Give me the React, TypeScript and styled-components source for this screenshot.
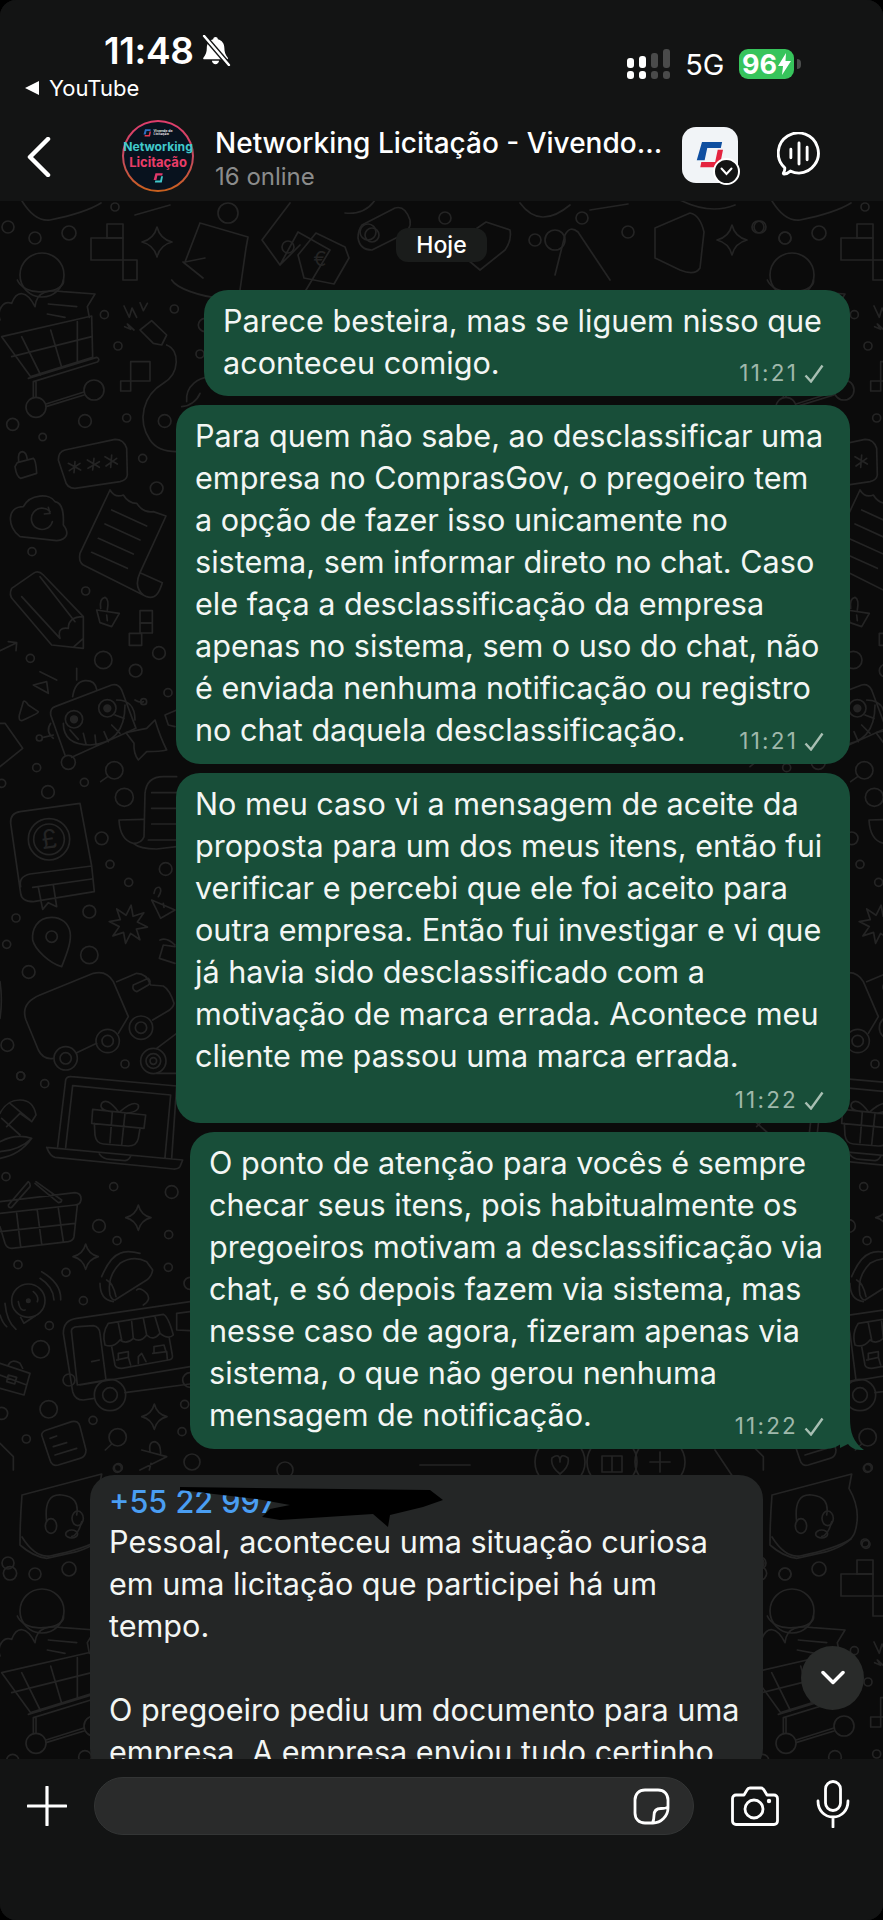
import React from "react";
import styled, { createGlobalStyle } from "styled-components";

const Global = createGlobalStyle`
  html, body { margin: 0; padding: 0; background: #000; }
  body { font-family: Inter, "Liberation Sans", sans-serif; -webkit-font-smoothing: antialiased; }
`;

const Screen = styled.div`
  width: 883px;
  height: 1920px;
  display: flex;
  flex-direction: column;
  overflow: hidden;
  border-radius: 16px;
  background: #131414;
  color: #fff;
`;

/* ---------- top bar ---------- */
const Header = styled.header`
  height: 201px;
  flex: none;
  display: flex;
  flex-direction: column;
  background: #131414;
  position: relative;
  z-index: 2;
`;
const StatusBar = styled.div`
  height: 120px;
  display: flex;
  justify-content: space-between;
  box-sizing: border-box;
  padding: 28px 89px 0 25px;
`;
const StatusLeft = styled.div`
  display: flex;
  flex-direction: column;
`;
const ClockRow = styled.div`
  display: flex;
  align-items: center;
  gap: 8px;
  margin-left: 79px;
  height: 44px;
`;
const Clock = styled.span`
  font-size: 37px;
  font-weight: 600;
  letter-spacing: -0.4px;
`;
const BackApp = styled.div`
  display: flex;
  align-items: center;
  gap: 9px;
  font-size: 22px;
  height: 28px;
  margin-top: 2px;
`;
const StatusRight = styled.div`
  display: flex;
  align-items: center;
  height: 30px;
  margin-top: 21px;
`;
const Network = styled.span`
  font-size: 29px;
  margin: 0 15px 0 15px;
  letter-spacing: -0.3px;
`;
const Battery = styled.div`
  width: 55px;
  height: 30px;
  border-radius: 9px;
  background: #37c45c;
  display: flex;
  align-items: center;
  justify-content: center;
  gap: 1px;
  font-size: 27px;
  font-weight: 700;
  position: relative;
`;
const BatteryCap = styled.i`
  position: absolute;
  right: -7px;
  top: 10px;
  width: 4px;
  height: 10px;
  border-radius: 0 4px 4px 0;
  background: #4b4d4c;
`;
const NavBar = styled.div`
  height: 81px;
  display: flex;
  align-items: flex-start;
  padding-left: 27px;
`;
const BackIcon = styled.svg`
  width: 24px;
  height: 40px;
  margin-top: 17px;
`;
const Avatar = styled.div`
  width: 72px;
  height: 72px;
  margin: 0 21px 0 71px;
  border-radius: 50%;
  background: linear-gradient(180deg, #e03d6c 0%, #c64b5d 55%, #c9611c 100%);
  padding: 2px;
  box-sizing: border-box;
  flex: none;
`;
const AvatarInner = styled.div`
  width: 100%;
  height: 100%;
  border-radius: 50%;
  background: #08121e;
  display: flex;
  flex-direction: column;
  align-items: center;
  justify-content: center;
  font-weight: 800;
  line-height: 1;
`;
const AvatarTop = styled.div`
  display: flex;
  align-items: center;
  gap: 2px;
  font-size: 3.5px;
  font-weight: 600;
  line-height: 1.1;
  color: #e8e8e8;
  margin-bottom: 4px;
`;
const AvatarTeal = styled.span`
  font-size: 12.2px;
  font-weight: 700;
  color: #41c9cc;
`;
const AvatarPink = styled.span`
  font-size: 13px;
  font-weight: 700;
  color: #ea3d68;
  margin: 2px 0 4px;
`;
const Titles = styled.div`
  width: 467px;
  flex: none;
  margin-top: 4px;
`;
const Title = styled.div`
  font-size: 28px;
  font-weight: 500;
  line-height: 38px;
  white-space: nowrap;
`;
const Subtitle = styled.div`
  font-size: 24px;
  line-height: 29px;
  color: #8b8c8c;
`;
const AppTile = styled.div`
  width: 56px;
  height: 56px;
  margin-top: 7px;
  border-radius: 14px;
  background: #f1f4f7;
  position: relative;
  flex: none;
`;
const TileMark = styled.div`
  position: absolute;
  left: 13px;
  top: 14px;
`;
const TileBadge = styled.div`
  position: absolute;
  right: -2px;
  bottom: -2px;
  width: 27px;
  height: 27px;
  border-radius: 50%;
  background: #131414;
  border: 2px solid #fff;
  box-sizing: border-box;
  display: flex;
  align-items: center;
  justify-content: center;
`;
const CallIcon = styled.svg`
  width: 44px;
  height: 44px;
  margin: 12px 0 0 39px;
`;

/* ---------- conversation ---------- */
const Chat = styled.main`
  flex: 1;
  min-height: 0;
  position: relative;
  overflow: hidden;
  background: #0b0b0b;
  display: flex;
  flex-direction: column;
  align-items: flex-end;
  padding: 27px 33px 0 0;
  box-sizing: border-box;
`;
const Wallpaper = styled.svg`
  position: absolute;
  left: 0;
  top: 0;
  width: 883px;
  height: 1558px;
  fill: none;
  stroke: #242424;
  stroke-width: 1.7;
  stroke-linecap: round;
  stroke-linejoin: round;
  * { vector-effect: non-scaling-stroke; }
  text { fill: #242424; stroke: none; font-family: Inter, sans-serif; }
`;
const DayPill = styled.div`
  flex: none;
  align-self: center;
  margin-left: 33px;
  width: 91px;
  height: 34px;
  border-radius: 12px;
  background: #1a1c1b;
  font-size: 23px;
  font-weight: 500;
  display: flex;
  align-items: center;
  justify-content: center;
  margin-bottom: 28px;
  position: relative;
`;
const Bubble = styled.div<{ $width: number; $bottom: number }>`
  position: relative;
  flex: none;
  box-sizing: border-box;
  width: ${(p) => p.$width}px;
  padding: 10px 12px ${(p) => p.$bottom}px 19px;
  margin-bottom: 9px;
  border-radius: 24px;
  background: #184e39;
  font-size: 30.6px;
  line-height: 42px;
  color: #f3f6f4;
  white-space: nowrap;
`;
const IncomingBubble = styled(Bubble)`
  align-self: flex-start;
  margin: 17px 0 0 90px;
  padding: 6px 12px 0 19px;
  background: #242626;
`;
const Sender = styled.div`
  height: 40px;
  line-height: 42px;
  color: #4a9ef2;
  font-weight: 500;
  position: relative;
`;
const Redaction = styled.svg`
  position: absolute;
  left: 71px;
  top: 6px;
  width: 270px;
  height: 44px;
`;
const Meta = styled.div`
  position: absolute;
  right: 26px;
  bottom: 11px;
  display: flex;
  align-items: center;
  gap: 6px;
  font-size: 22.5px;
  line-height: 24px;
  letter-spacing: 2.2px;
  color: #9fb8ab;
`;
const Tail = styled.svg`
  position: absolute;
  right: -14px;
  bottom: -1px;
  width: 24px;
  height: 32px;
`;
const ScrollDown = styled.div`
  position: absolute;
  right: 19px;
  bottom: 49px;
  width: 63px;
  height: 64px;
  border-radius: 50%;
  background: #292b2a;
  display: flex;
  align-items: center;
  justify-content: center;
`;

/* ---------- composer ---------- */
const Composer = styled.footer`
  height: 161px;
  flex: none;
  box-sizing: border-box;
  padding: 18px 0 0 27px;
  display: flex;
  align-items: flex-start;
  background: #131414;
  position: relative;
  z-index: 2;
`;
const PlusIcon = styled.svg`
  width: 40px;
  height: 40px;
  margin-top: 9px;
  flex: none;
`;
const InputField = styled.div`
  width: 600px;
  height: 58px;
  margin-left: 27px;
  box-sizing: border-box;
  padding: 10px 23px 0 0;
  border-radius: 29px;
  background: #2a2b2b;
  border: 1px solid #333535;
  display: flex;
  justify-content: flex-end;
  flex: none;
`;
const CameraIcon = styled.svg`
  width: 48px;
  height: 40px;
  margin: 9px 0 0 37px;
`;
const MicIcon = styled.svg`
  width: 34px;
  height: 48px;
  margin: 3px 0 0 37px;
`;

/* ---------- doodle helpers ---------- */
const dots = (list: number[][]) =>
  list.map(([cx, cy, r], i) => <circle key={i} cx={cx} cy={cy} r={r} />);

const sparkle = (x: number, y: number, r: number) =>
  `M${x} ${y - r}Q${x + r * 0.2} ${y - r * 0.2} ${x + r} ${y}Q${x + r * 0.2} ${y + r * 0.2} ${x} ${y + r}Q${x - r * 0.2} ${y + r * 0.2} ${x - r} ${y}Q${x - r * 0.2} ${y - r * 0.2} ${x} ${y - r}Z`;

const burst = (cx: number, cy: number, R: number, r: number, n: number) =>
  Array.from({ length: n * 2 }, (_, i) => {
    const a = (Math.PI * i) / n - Math.PI / 2.2;
    const d = i % 2 ? r : R;
    return `${(cx + Math.cos(a) * d).toFixed(1)},${(cy + Math.sin(a) * d).toFixed(1)}`;
  }).join(" ");

const Doodles = () => (
  <Wallpaper viewBox="0 201 883 1558">
    <defs>
      <g id="wall-tile">
        {/* cart, plug, password card, cloud, receipt and pencil */}
        <g transform="translate(0 280) scale(.33333)">
          <path d="M5 170L275 108L278 232L92 290ZM65 170L122 285M152 150L185 262M232 125V245M35 230L275 170M85 295L290 232Q302 238 292 246L100 305M100 305V350M108 305V352M138 372L252 336M138 380L252 345" />
          {dots([[108, 382, 30], [282, 330, 30]])}
          <path d="M105 80C110 30 150 30 190 35L285 42L262 80L268 112M145 72L230 80M142 102L195 112M105 80C80 30 50 30 35 70C10 60-10 90 0 120" />
          <path d="M372 78L388 112L396 84L410 112M420 68L430 92L442 70M374 140L392 148L382 132L402 150M420 150L455 122L500 165L485 195L460 190ZM500 195C540 210 540 280 490 310C430 345 410 420 450 480C470 510 500 515 530 515" />
          <rect x="392" y="245" width="58" height="58" />
          <rect x="362" y="303" width="30" height="30" />
          {dots([[313, 104, 12], [354, 198, 12], [523, 87, 12], [38, 433, 18], [255, 423, 19], [128, 471, 11], [380, 414, 12], [494, 423, 19], [428, 535, 12], [470, 625, 19], [96, 815, 12], [257, 933, 12], [310, 1140, 26], [477, 1119, 19], [91, 1135, 12], [407, 1172, 19], [600, 222, 12]])}
          <path d="M52 548L100 535Q108 540 110 580L62 595Q50 592 45 560ZM56 545Q52 515 68 515Q80 518 82 540" />
          <path d="M195 510L345 478Q372 478 380 505L382 585Q380 600 360 605L225 625Q200 625 195 600L175 540Q175 515 195 510ZM205 550L242 570M225 545L222 578M240 550L208 572M262 540L298 562M282 535L278 570M298 545L264 565M315 530L352 552M335 525L332 562M350 535L318 558" />
          <path d="M60 770C20 740 20 680 70 680C90 640 150 640 165 665C195 670 190 720 190 735C210 760 200 780 170 782ZM150 695A32 32 0 1 0 157 725M145 682L150 700L133 702" />
          <path d="M330 630L240 820Q235 845 250 855L440 950C470 960 480 930 487 908L420 878C410 900 405 925 430 945M330 630Q345 655 370 645Q385 670 410 670Q430 700 460 695L498 708L420 878M335 690L440 738M315 732L420 780M295 775L400 822M275 817L382 865" />
          <path d="M35 925L100 880Q115 870 130 885L250 1010L250 1105L155 1095L40 960Q25 945 35 925ZM65 950L180 1075M120 890L225 1025M180 1075Q170 1040 205 1045Q205 1010 250 1010M222 1100L250 1075" />
          <path d="M290 990L358 1000L335 1040L300 1028ZM302 985Q298 955 315 952Q328 958 322 990M320 1005L322 1022" />
          <rect x="420" y="992" width="37" height="37" />
          <rect x="420" y="1029" width="37" height="30" />
          <rect x="388" y="1060" width="37" height="36" />
          <path d="M0 1112L50 1088M25 1085L50 1088L48 1112M120 1175L170 1200M230 1165V1200" />
          <path d="M52 0C60 20 90 40 130 35C170 35 195 15 190 0M515 0C530 25 600 50 665 55M600 340A65 65 0 0 1 545 380M560 365A65 65 0 0 1 640 295" />
          {dots([[615, 135, 20]])}
        </g>

        {/* robot, ledger, pin, truck and small shapes */}
        <g transform="translate(0 680) scale(.33333)">
          <path d="M165 80L335 15Q355 10 365 30L408 145L215 232M165 80Q150 85 152 105L195 225M190 130Q190 195 270 195Q375 190 375 75M210 150L235 178M250 160L258 192M285 165L288 195M312 155L325 185M335 135L360 160M345 105L372 115M152 130Q135 155 160 175M130 172L160 165M405 60Q420 70 430 65M350 60Q405 60 405 120" />
          {dots([[222, 118, 26], [322, 85, 26], [205, 247, 21], [118, 174, 9], [431, 65, 9]])}
          <circle cx="222" cy="118" r="10" fill="#242424" />
          <circle cx="322" cy="85" r="10" fill="#242424" />
          <path d="M70 65Q75 60 85 75L115 95Q115 100 65 122Q55 122 58 105Z" />
          <path d="M465 120Q480 170 500 210Q480 215 440 215L415 240Q400 220 402 190L378 158Q410 150 440 145Z" />
          <path d="M323 290L302 305" />
          {dots([[343, 271, 26], [110, 263, 12], [253, 307, 12], [144, 336, 19], [373, 352, 27], [305, 475, 19], [330, 553, 12], [386, 607, 12], [497, 567, 19], [268, 695, 19], [48, 714, 12], [20, 793, 12], [268, 825, 26], [86, 876, 19], [504, 38, 12], [375, 1152, 12], [62, 1188, 12], [22, 1095, 19], [5, 310, 12]])}
          <path d="M240 370L60 395Q30 400 32 430L62 640Q65 665 100 665L283 635L275 558L240 370M275 558L90 582Q55 590 62 620M275 597L98 622M115 622L128 688L145 668L170 680L160 615" />
          {dots([[147, 478, 62], [147, 478, 46]])}
          <text x="147" y="505" fontSize="78" textAnchor="middle" transform="rotate(-8 147 478)">£</text>
          <path d="M155 712C110 712 95 750 98 780C105 810 150 850 185 860C205 810 215 780 210 755C205 730 185 712 155 712Z" />
          <circle cx="155" cy="770" r="17" />
          <polygon points={burst(385, 733, 58, 28, 8)} />
          <path d="M530 290H490Q440 290 435 340L432 470Q425 490 400 490Q360 480 357 420L430 418M400 490Q420 507 470 507L530 500M455 338H530M455 385H530M455 432H530M445 480H530" />
          <path d="M455 660L525 690L482 715L470 690ZM462 640Q465 620 478 622Q488 630 475 650M490 670L492 682M480 780Q500 770 525 795M490 795L525 800M490 795L478 835L525 850" />
          <path d="M120 945L280 880Q320 870 340 905L385 1010L355 1060M290 1090L230 1118M160 1135Q130 1140 115 1110L78 1020Q60 970 120 945M350 905L410 880Q440 880 452 915L490 918Q510 930 522 970Q520 985 500 995L458 1020M400 915L445 895Q455 905 445 915L410 935Q395 930 400 915" />
          {dots([[197, 1135, 35], [197, 1135, 17], [323, 1083, 35], [323, 1083, 17], [423, 1043, 35], [423, 1043, 17], [460, 1143, 38], [460, 1143, 22], [460, 1143, 10]])}
          <path d="M470 1105L530 1060M470 1180H530M0 130L15 130L68 205L0 260M100 15L140 5L145 40ZM218 50Q225 5 255 2Q285 0 290 28M0 905Q8 960 0 1015" />
          <path d="M530 90L495 105L505 135L525 140" />
        </g>

        {/* laptop, basket, taco, food truck and note card */}
        <g transform="translate(0 1070) scale(.33333)">
          <path d="M173 230L197 30Q200 18 215 20L530 48L515 265M197 232L218 47L512 75L495 262M140 232L548 270L540 290Q535 298 520 297L165 262Q150 258 140 232M298 252Q310 268 330 268L375 272Q388 270 392 258" />
          <path d="M278 118L437 135L432 175L275 160ZM283 160L285 195Q288 220 310 222L385 228Q410 228 415 205L420 175M337 125L330 218M375 130L365 225M355 125Q320 80 305 100Q295 120 335 125M360 125Q400 90 415 105Q420 125 380 130" />
          <path d="M0 130Q20 90 60 90Q100 90 108 135L95 155L60 130L20 170M30 100L90 150M5 145L60 195M0 245Q60 240 95 205Q50 190 0 215M0 265Q60 255 95 205" />
          <path d="M0 395L225 368Q245 370 243 390Q240 405 225 405L0 430M232 405L222 500Q220 512 205 515L35 535Q20 535 15 520L0 470M50 430L62 530M112 422L125 522M175 415L190 515M0 485L225 460M25 405L85 335Q92 340 90 350L35 412Q25 415 25 405M108 335L185 390Q185 398 175 398L105 340" />
          <path d={sparkle(415, 443, 38)} />
          <path d={sparkle(257, 560, 38)} />
          <path d={sparkle(463, 1040, 38)} />
          <path d="M345 690Q335 690 330 675Q320 620 360 580Q400 555 440 575L458 600Q455 620 440 630L345 690M305 620Q330 560 360 550Q380 540 420 550M300 640Q300 690 340 695M320 630Q340 640 348 680M410 660Q420 650 440 670Q455 690 430 705" />
          <path d="M62 742L72 760L105 738M55 695Q60 725 75 720M100 665Q118 680 112 695M120 625Q160 650 162 690M125 605Q185 640 182 690M15 700Q20 755 48 778M0 735Q8 760 20 770" />
          <circle cx="85" cy="692" r="50" />
          <circle cx="85" cy="692" r="5" fill="#242424" />
          <path d="M190 790Q190 750 230 745L570 695M190 790L218 965Q225 990 250 990L283 985M375 968L570 942M215 790Q210 770 235 770L280 767Q298 770 300 790L318 930L232 945ZM570 890L240 945M275 875L298 870M325 760L490 733Q505 740 520 795Q505 810 480 790Q460 815 440 795Q420 820 400 805Q380 825 360 810Q340 835 315 825Q305 790 325 760M355 760L365 810M395 755L400 805M430 745L440 795M465 740L480 790M335 830L345 885Q348 895 365 895L505 870Q520 868 517 855L508 805M350 870L385 862L392 885M355 870V850L385 845V860M415 880V860L425 850L438 875M458 850L500 845L502 868M462 850V830L492 825L498 845M530 730L570 725M530 730V780L570 782" />
          {dots([[330, 975, 47], [330, 975, 22], [207, 930, 18], [570, 930, 22]])}
          <path d="M0 880L90 910L72 975L0 955M25 885Q35 865 60 880L68 895M0 915L80 945M25 915L50 922L44 942L20 935Z" />
          <path d="M140 1080L215 1055Q235 1050 240 1070L258 1140Q258 1160 240 1165L175 1185Q155 1190 150 1170L125 1095Q125 1085 140 1080ZM150 1105L170 1098M160 1130L200 1118M165 1155L230 1135" />
          <path d="M335 1122L316 1140M0 1120L40 1160V1200M425 1140L500 1160L420 1200M450 1145Q445 1115 465 1115Q482 1120 482 1150M453 1180L448 1200" />
          {dots([[353, 1102, 26], [62, 18, 12], [134, 41, 12], [18, 320, 12], [341, 350, 12], [515, 366, 19], [297, 468, 19], [506, 494, 12], [351, 512, 12], [505, 592, 12], [54, 584, 12], [198, 607, 12], [250, 692, 12], [148, 767, 12], [122, 838, 26], [146, 1018, 26], [279, 1051, 12], [79, 1107, 12], [546, 1085, 12], [554, 1003, 12], [352, 1195, 12], [5, 1030, 18], [570, 640, 18]])}
        </g>

        {/* headset speech bubble just below the column above */}
        <g transform="translate(30 1380) scale(.33333)">
          <path d="M-24 345L215 282L207 325Q245 390 225 455Q215 490 140 515L50 535Q10 530-30 495Q-30 420-24 345ZM50 425Q40 340 95 345Q150 350 140 405M125 470Q145 465 155 425" />
          <ellipse cx="63" cy="438" rx="17" ry="22" />
          <ellipse cx="143" cy="415" rx="17" ry="22" />
          <ellipse cx="125" cy="462" rx="18" ry="12" />
          {dots([[265, 263, 12], [258, 493, 12], [-60, 580, 20]])}
        </g>

        {/* band directly under the header */}
        <g>
          <path d="M22 201Q35 222 50 220Q85 213 101 203M135 215L170 205" />
          <path d="M262 240L290 203M262 240L280 265L300 245M280 265L298 232L330 250L300 300M345 213Q365 215 375 200" />
          <path d="M362 225L395 208Q405 205 410 220Q412 230 400 236L372 250Q360 250 358 238Q358 230 362 225Z" />
          <circle cx="368" cy="232" r="8" />
          <path d="M298 255L316 233L345 247L349 258L334 284L304 278Z" />
          <text x="320" y="266" fontSize="20" textAnchor="middle">€</text>
          <path d="M200 223L248 237L246 248L240 290M200 223L185 262L205 258M183 262L203 278" />
          <path d={sparkle(157, 242, 15)} />
          <rect x="107" y="224" width="16" height="14" />
          <rect x="91" y="238" width="32" height="22" />
          <rect x="123" y="260" width="14" height="20" />
          <circle cx="42" cy="275" r="22" />
          <path d="M460 240L486 222L510 230Q512 240 505 250L480 270L462 255M590 210L628 204M555 275L565 235Q570 225 578 232L610 280M655 228L690 213Q700 215 704 232L700 268Q695 276 680 270L655 258ZM680 200Q710 215 735 205M520 203Q540 230 570 205" />
          <path d={sparkle(732, 240, 15)} />
          {dots([[8, 227, 6], [35, 238, 6], [69, 233, 7], [115, 207, 4], [228, 213, 10], [288, 247, 6], [372, 235, 7], [445, 218, 6], [535, 240, 6], [555, 240, 10], [582, 218, 6], [628, 232, 6], [760, 227, 6], [785, 238, 6]])}
        </g>

        {/* row of round badges that peeks out under the last sent message */}
        <g>
          {dots([[560, 1462, 25], [612, 1462, 25], [660, 1462, 25], [192, 1462, 8], [285, 1470, 8]])}
          <path d="M660 1452V1472M650 1462H670M602 1456H622V1472H602ZM612 1456V1472M552 1458Q560 1452 560 1462Q560 1452 568 1458Q570 1466 560 1474Q550 1466 552 1458ZM715 1450L735 1480M420 1465H470" />
        </g>
      </g>
    </defs>
    <use href="#wall-tile" />
    <use href="#wall-tile" x="750" />
    <use href="#wall-tile" y="1336" />
    <use href="#wall-tile" x="750" y="1336" />
  </Wallpaper>
);

/* ---------- small drawings ---------- */
const MutedBell = () => (
  <svg width="30" height="31" viewBox="0 0 29 30">
    <path fill="#fff" d="M14 2c1.300 0 2.200.9 2.300 2 4 1 6.300 4.200 6.300 8.600 0 4 1 6.600 3.300 9.300.5.700.1 1.600-.8 1.600H3.100c-.9 0-1.300-.9-.8-1.600 2.300-2.700 3.300-5.300 3.300-9.300 0-4.400 2.300-7.600 6.200-8.600.1-1.100 1-2 2.200-2zM10.500 25h7c-.4 2-1.800 3.400-3.500 3.400s-3.100-1.400-3.500-3.400z" />
    <path stroke="#131414" strokeWidth="5" d="M3 1l24 28" />
    <path stroke="#fff" strokeWidth="2.400" strokeLinecap="round" d="M3 1l24 28" />
  </svg>
);

const LeftArrow = () => (
  <svg width="15" height="14" viewBox="0 0 15 14">
    <path fill="#fff" d="M0 7L14 0v14z" />
  </svg>
);

const SignalBars = () => (
  <svg width="44" height="31" viewBox="0 0 44 31">
    <g fill="#fff">
      <rect x="1" y="9" width="7" height="10" rx="3" />
      <rect x="1" y="22" width="7" height="8" rx="3" />
      <rect x="13" y="7" width="7" height="12" rx="3" />
      <rect x="13" y="22" width="7" height="8" rx="3" />
    </g>
    <g fill="#4a4b4b">
      <rect x="25" y="4" width="7" height="15" rx="3" />
      <rect x="25" y="22" width="7" height="8" rx="3" />
      <rect x="37" y="0" width="7" height="19" rx="3" />
      <rect x="37" y="22" width="7" height="8" rx="3" />
    </g>
  </svg>
);

const Bolt = () => (
  <svg width="13" height="22" viewBox="0 0 13 22">
    <path fill="#fff" d="M8 0L0 13h5l-1 9 9-14H7.500z" />
  </svg>
);

const BrandMark = ({ size, a, b }: { size: number; a: string; b: string }) => (
  <svg width={size} height={size} viewBox="0 0 32 32">
    <path fill={a} d="M8 1h23l-1.500 7H14l-3 14H2z" />
    <path fill={b} d="M26 10h6l-4 20H6l1.200-6H23z" />
  </svg>
);

const Tick = () => (
  <svg width="20" height="19" viewBox="0 0 20 19">
    <path d="M1.500 11.500L7 17.500L18.500 1.500" fill="none" stroke="#a8bfb3" strokeWidth="2.400" />
  </svg>
);

type Message = { lines: string[]; time: string; width: number; bottom: number; tail?: boolean };

const sent: Message[] = [
  {
    lines: ["Parece besteira, mas se liguem nisso que", "aconteceu comigo."],
    time: "11:21",
    width: 646,
    bottom: 12,
  },
  {
    lines: [
      "Para quem não sabe, ao desclassificar uma",
      "empresa no ComprasGov, o pregoeiro tem",
      "a opção de fazer isso unicamente no",
      "sistema, sem informar direto no chat. Caso",
      "ele faça a desclassificação da empresa",
      "apenas no sistema, sem o uso do chat, não",
      "é enviada nenhuma notificação ou registro",
      "no chat daquela desclassificação.",
    ],
    time: "11:21",
    width: 674,
    bottom: 13,
  },
  {
    lines: [
      "No meu caso vi a mensagem de aceite da",
      "proposta para um dos meus itens, então fui",
      "verificar e percebi que ele foi aceito para",
      "outra empresa. Então fui investigar e vi que",
      "já havia sido desclassificado com a",
      "motivação de marca errada. Acontece meu",
      "cliente me passou uma marca errada.",
    ],
    time: "11:22",
    width: 674,
    bottom: 46,
  },
  {
    lines: [
      "O ponto de atenção para vocês é sempre",
      "checar seus itens, pois habitualmente os",
      "pregoeiros motivam a desclassificação via",
      "chat, e só depois fazem via sistema, mas",
      "nesse caso de agora, fizeram apenas via",
      "sistema, o que não gerou nenhuma",
      "mensagem de notificação.",
    ],
    time: "11:22",
    width: 660,
    bottom: 13,
    tail: true,
  },
];

const received = [
  "Pessoal, aconteceu uma situação curiosa",
  "em uma licitação que participei há um",
  "tempo.",
  "\u00a0",
  "O pregoeiro pediu um documento para uma",
  "empresa. A empresa enviou tudo certinho",
];

export default function App() {
  return (
    <Screen>
      <Global />
      <Header>
        <StatusBar>
          <StatusLeft>
            <ClockRow>
              <Clock>11:48</Clock>
              <MutedBell />
            </ClockRow>
            <BackApp>
              <LeftArrow />
              YouTube
            </BackApp>
          </StatusLeft>
          <StatusRight>
            <SignalBars />
            <Network>5G</Network>
            <Battery>
              96
              <Bolt />
              <BatteryCap />
            </Battery>
          </StatusRight>
        </StatusBar>
        <NavBar>
          <BackIcon viewBox="0 0 24 40">
            <path d="M21 2L3 20l18 18" fill="none" stroke="#fff" strokeWidth="4.500" strokeLinecap="round" strokeLinejoin="round" />
          </BackIcon>
          <Avatar>
            <AvatarInner>
              <AvatarTop>
                <BrandMark size={8} a="#2c6fc0" b="#e0384f" />
                <span>
                  Vivendo de
                  <br />
                  Licitação
                </span>
              </AvatarTop>
              <AvatarTeal>Networking</AvatarTeal>
              <AvatarPink>Licitação</AvatarPink>
              <BrandMark size={10} a="#e0386a" b="#41c9cc" />
            </AvatarInner>
          </Avatar>
          <Titles>
            <Title>Networking Licitação - Vivendo...</Title>
            <Subtitle>16 online</Subtitle>
          </Titles>
          <AppTile>
            <TileMark>
              <BrandMark size={28} a="#0f4fa0" b="#e4233f" />
            </TileMark>
            <TileBadge>
              <svg width="13" height="9" viewBox="0 0 13 9">
                <path d="M1.500 1.500l5 5.500 5-5.500" fill="none" stroke="#fff" strokeWidth="2" strokeLinecap="round" />
              </svg>
            </TileBadge>
          </AppTile>
          <CallIcon viewBox="0 0 46 46">
            <path d="M7.500 44c-.8 0-1.100-.8-.7-1.400 1-1.500 1.500-3.200 1.300-5.100A21 21 0 1 1 23 43c-3.300 0-6.300-.8-9-2.100-2 1.800-4 2.900-6.500 3.100z" fill="none" stroke="#fff" strokeWidth="3" />
            <path d="M14.500 18v9M23 11.500v22M31.500 16v13" fill="none" stroke="#fff" strokeWidth="3" strokeLinecap="round" />
          </CallIcon>
        </NavBar>
      </Header>

      <Chat>
        <Doodles />
        <DayPill>Hoje</DayPill>
        {sent.map((m) => (
          <Bubble key={m.lines[0]} $width={m.width} $bottom={m.bottom}>
            {m.lines.map((l) => (
              <div key={l}>{l}</div>
            ))}
            <Meta>
              {m.time}
              <Tick />
            </Meta>
            {m.tail && (
              <Tail viewBox="0 0 24 32">
                <path d="M10 0c0 14 3 24 14 32-8 0-12-1-16-6L0 30V0z" fill="#184e39" />
              </Tail>
            )}
          </Bubble>
        ))}
        <IncomingBubble $width={673} $bottom={0}>
          <Sender>
            +55 22 997
            <Redaction viewBox="0 0 270 44">
              <path
                fill="#000"
                d="M0 0L250 3L263 13L243 20L210 28L208 40L193 27L100 33L82 30L90 22L110 18L77 12L0 3Z"
              />
            </Redaction>
          </Sender>
          {received.map((l) => (
            <div key={l}>{l}</div>
          ))}
        </IncomingBubble>
        <ScrollDown>
          <svg width="24" height="16" viewBox="0 0 24 16">
            <path d="M2 2.500l10 10 10-10" fill="none" stroke="#fff" strokeWidth="3.500" strokeLinecap="round" strokeLinejoin="round" />
          </svg>
        </ScrollDown>
      </Chat>

      <Composer>
        <PlusIcon viewBox="0 0 40 40">
          <path d="M20 1v38M1 20h38" fill="none" stroke="#fff" strokeWidth="3.200" strokeLinecap="round" />
        </PlusIcon>
        <InputField>
          <svg width="37" height="37" viewBox="0 0 37 37">
            <path
              d="M12 2h13c6 0 10 4 10 10v8C35 28 28 35 20 35h-8C6 35 2 31 2 25V12C2 6 6 2 12 2zM35 19c-2 1.500-4 1.500-7 1.500-5 0-7 3-7 7 0 3-.5 5.500-1.500 7.500"
              fill="none"
              stroke="#fff"
              strokeWidth="2.800"
              strokeLinecap="round"
            />
          </svg>
        </InputField>
        <CameraIcon viewBox="0 0 48 40">
          <path d="M5 9h8l3-5c.5-1 1.500-2 3-2h11c1.500 0 2.500 1 3 2l3 5h7c2 0 3.500 1.500 3.500 3.500V35c0 2-1.500 3.500-3.500 3.500H5c-2 0-3.500-1.500-3.500-3.500V12.500C1.500 10.500 3 9 5 9z" fill="none" stroke="#fff" strokeWidth="2.800" strokeLinejoin="round" />
          <circle cx="23" cy="23" r="9" fill="none" stroke="#fff" strokeWidth="2.800" />
          <circle cx="38" cy="15" r="2.200" fill="#fff" />
        </CameraIcon>
        <MicIcon viewBox="0 0 34 48">
          <rect x="9.500" y="1.500" width="15" height="29" rx="7.500" fill="none" stroke="#fff" strokeWidth="2.800" />
          <path d="M2 21c0 9 6 16 15 16s15-7 15-16M17 37v10" fill="none" stroke="#fff" strokeWidth="2.800" strokeLinecap="round" />
        </MicIcon>
      </Composer>
    </Screen>
  );
}
